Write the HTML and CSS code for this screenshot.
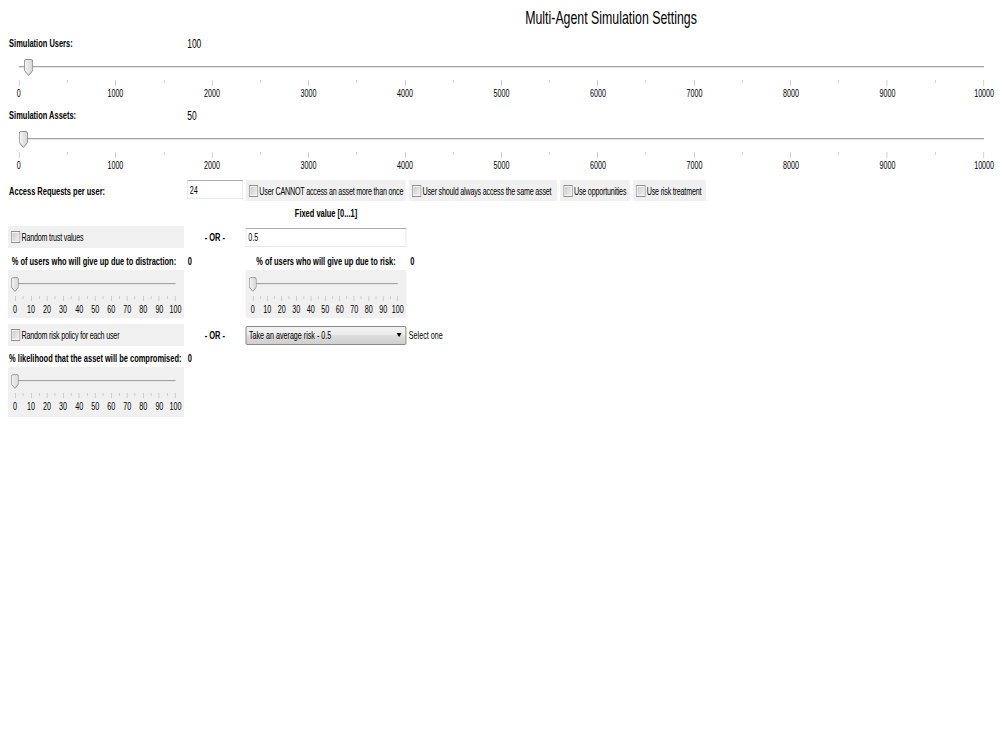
FILE: index.html
```html
<!DOCTYPE html>
<html lang="en">
<head>
  <meta charset="UTF-8">
  <meta name="viewport" content="width=device-width, initial-scale=1.0">
  <title>Multi-Agent Simulation Settings</title>
  <link rel="stylesheet" href="styles.css">
</head>
<body>
  <svg class="defs" width="0" height="0">
    <defs>
      <linearGradient id="thumbGrad" x1="0" y1="0" x2="1" y2="0">
        <stop offset="0" stop-color="#f6f6f6"/>
        <stop offset="1" stop-color="#d4d4d4"/>
      </linearGradient>
      <symbol id="thumb" viewBox="0 0 14 17">
        <path d="M0.5 3 Q0.5 0.5 3 0.5 H11 Q13.5 0.5 13.5 3 V11.5 L7 16.5 L0.5 11.5 Z" fill="url(#thumbGrad)" stroke="#767676"/>
      </symbol>
    </defs>
  </svg>

  <div class="frame">
  <div class="page">
    <h1 class="title">Multi-Agent Simulation Settings</h1>

    <div class="setting">
      <div class="setting-head">
        <span class="setting-name">Simulation Users:</span>
        <span class="setting-value">100</span>
      </div>
      <div class="slider big" data-max="10000" data-value="100">
        <div class="track"><svg class="thumb"><use href="#thumb"/></svg></div>
        <div class="ticks"></div>
        <div class="labels"></div>
      </div>
    </div>

    <div class="setting">
      <div class="setting-head">
        <span class="setting-name">Simulation Assets:</span>
        <span class="setting-value">50</span>
      </div>
      <div class="slider big" data-max="10000" data-value="50">
        <div class="track"><svg class="thumb"><use href="#thumb"/></svg></div>
        <div class="ticks"></div>
        <div class="labels"></div>
      </div>
    </div>

    <div class="options">
      <div class="row row-access">
        <span class="c1 name">Access Requests per user:</span>
        <div class="c2"><input class="field short" type="text" value="24"></div>
        <div class="checks">
          <label class="check w1"><span class="box"></span>User CANNOT access an asset more than once</label>
          <label class="check w2"><span class="box"></span>User should always access the same asset</label>
          <label class="check w3"><span class="box"></span>Use opportunities</label>
          <label class="check w4"><span class="box"></span>Use risk treatment</label>
        </div>
      </div>

      <div class="row row-caption">
        <span class="c3 solo name center">Fixed value [0...1]</span>
      </div>

      <div class="row row-choice">
        <label class="c1 check"><span class="box"></span>Random trust values</label>
        <span class="c2 name center">- OR -</span>
        <input class="c3 field" type="text" value="0.5">
      </div>

      <div class="row row-label">
        <span class="c1 name indent">% of users who will give up due to distraction:</span>
        <span class="c2 name num">0</span>
        <span class="c3 name center">% of users who will give up due to risk:</span>
        <span class="c4 name num">0</span>
      </div>

      <div class="row row-sliders">
        <div class="c1 slider-panel">
          <div class="slider small" data-max="100" data-value="0">
            <div class="track"><svg class="thumb"><use href="#thumb"/></svg></div>
            <div class="ticks"></div>
            <div class="labels"></div>
          </div>
        </div>
        <div class="c3 skip-c2 slider-panel">
          <div class="slider small" data-max="100" data-value="0">
            <div class="track"><svg class="thumb"><use href="#thumb"/></svg></div>
            <div class="ticks"></div>
            <div class="labels"></div>
          </div>
        </div>
      </div>

      <div class="row row-choice risk">
        <label class="c1 check"><span class="box"></span>Random risk policy for each user</label>
        <span class="c2 name center">- OR -</span>
        <div class="c3 combo">
          <span>Take an average risk - 0.5</span>
          <svg class="arrow" width="8" height="4" viewBox="0 0 8 4"><path d="M0 0 H8 L4 4 Z" fill="#000"/></svg>
        </div>
        <span class="c4">Select one</span>
      </div>

      <div class="row row-label tight">
        <span class="c1 name">% likelihood that the asset will be compromised:</span>
        <span class="c2 name num">0</span>
      </div>

      <div class="row row-sliders tall">
        <div class="c1 slider-panel">
          <div class="slider small" data-max="100" data-value="0">
            <div class="track"><svg class="thumb"><use href="#thumb"/></svg></div>
            <div class="ticks"></div>
            <div class="labels"></div>
          </div>
        </div>
      </div>
    </div>
  </div>
  </div>

  <script>
    document.querySelectorAll('.slider').forEach(slider => {
      const max = Number(slider.dataset.max);
      const value = Number(slider.dataset.value);
      const ticks = slider.querySelector('.ticks');
      const labels = slider.querySelector('.labels');

      for (let i = 0; i <= 20; i++) {
        const tick = document.createElement('span');
        tick.className = i % 2 ? 'tick minor' : 'tick';
        ticks.appendChild(tick);
      }
      for (let i = 0; i <= 10; i++) {
        const label = document.createElement('span');
        label.textContent = i * max / 10;
        labels.appendChild(label);
      }
      slider.querySelector('.thumb').style.left = (value / max * 100) + '%';
    });
  </script>
</body>
</html>
```

FILE: styles.css
```css
body {
  margin: 0;
  background-color: #fff;
  color: #000;
  font-family: "Liberation Sans", Arial, sans-serif;
  font-size: 11px;
}
.defs {
  position: absolute;
}
.frame {
  width: 1000px;
  overflow: hidden;
}
/* the whole form is drawn narrow, like the original window */
.page {
  width: 1539px;
  transform: scaleX(0.65);
  transform-origin: 0 0;
}
.title {
  margin: 8px 0 0;
  padding-left: 808px;
  font-size: 19px;
  font-weight: normal;
  line-height: 20px;
}
.setting {
  padding: 7px 0 0 14px;
}
.setting + .setting {
  padding-top: 8px;
}
.setting-head {
  display: flex;
  align-items: center;
  height: 16px;
}
.setting-name {
  width: 274px;
  font-size: 11.5px;
  font-weight: bold;
}
.setting-value {
  font-size: 13px;
}

/* sliders */
.slider.big {
  margin-left: 15px;
  width: 1485px;
  padding-top: 8px;
}
.track {
  position: relative;
  height: 18px;
}
.track::before {
  content: "";
  position: absolute;
  left: 0;
  right: 0;
  top: 7px;
  border-top: 1px solid #a3a3a3;
  border-bottom: 1px solid #e6e6e6;
}
.thumb {
  position: absolute;
  top: 0;
  width: 14px;
  height: 17px;
  transform: translateX(-50%);
}
.ticks {
  display: flex;
  justify-content: space-between;
  align-items: flex-start;
  height: 6px;
  margin-top: 3px;
}
.tick {
  width: 1px;
  height: 6px;
  background-color: #b8b8b8;
}
.tick.minor {
  height: 3px;
}
.labels {
  display: flex;
  justify-content: space-between;
  height: 12px;
  line-height: 12px;
  margin-top: 1px;
}
.labels span {
  display: flex;
  justify-content: center;
  width: 0;
  white-space: nowrap;
}
.slider-panel {
  box-sizing: border-box;
  height: 100%;
  padding: 6px 13px 0 11px;
  background-color: #f0f0f0;
}
.slider.small .thumb {
  width: 12px;
}
.slider.small .ticks {
  height: 5px;
  margin-top: 2px;
}
.slider.small .tick {
  height: 5px;
}
.slider.small .tick.minor {
  height: 3px;
}
.slider.small .labels {
  margin-top: 2px;
}

/* option rows */
.options {
  margin: 9px 0 0 12px;
}
.row {
  display: flex;
  align-items: center;
  white-space: nowrap;
}
.c1 {
  box-sizing: border-box;
  width: 271px;
  flex: none;
}
.c2 {
  box-sizing: border-box;
  width: 95px;
  flex: none;
}
.c3 {
  box-sizing: border-box;
  width: 247px;
  flex: none;
}
.c4 {
  padding-left: 4px;
}
.solo {
  margin-left: 366px;
}
.skip-c2 {
  margin-left: 95px;
}
.name {
  font-size: 11.5px;
  font-weight: bold;
}
.center {
  text-align: center;
}
.indent {
  padding-left: 6px;
}
.num {
  padding-left: 6px;
}
.row-access {
  height: 21px;
}
.row-access > .name {
  padding-left: 2px;
}
.row-access .c2 {
  align-self: flex-start;
}
.row-caption {
  height: 25px;
  line-height: 25px;
}
.row-choice {
  height: 22px;
}
.row-choice.risk {
  margin-top: 6px;
}
.row-label {
  height: 22px;
  align-items: flex-end;
  line-height: 16px;
}
.row-label > span {
  padding-bottom: 1px;
}
.row-label.tight {
  height: 21px;
}
.row-label.tight > .c1 {
  padding-left: 2px;
}
.row-label .c4 {
  padding-left: 6px;
}
.row-sliders {
  height: 48px;
  align-items: stretch;
}
.row-sliders.tall {
  height: 50px;
}

/* inputs */
.field {
  box-sizing: border-box;
  height: 19px;
  margin: 0;
  padding: 0 3px;
  border: 1px solid #abadb3;
  border-color: #abadb3 #dbdfe6 #e3e9ef #e2e3ea;
  background-color: #fff;
  font-family: inherit;
  font-size: 11px;
  color: #000;
}
.field.short {
  margin-left: 5px;
  width: 86px;
}
.checks {
  display: flex;
  gap: 5px;
  height: 21px;
}
.check {
  box-sizing: border-box;
  display: flex;
  align-items: center;
  height: 21px;
  padding-left: 5px;
  background-color: #f0f0f0;
  letter-spacing: -0.3px;
}
.row-choice .check {
  height: 22px;
}
.w1 { width: 246px; }
.w2 { width: 228px; }
.w3 { width: 107px; }
.w4 { width: 112px; }
.box {
  box-sizing: border-box;
  flex: none;
  width: 14px;
  height: 12px;
  margin-right: 2px;
  border: 1px solid #8e8f8f;
  background: linear-gradient(135deg, #c9c9c9, #f4f4f4);
  box-shadow: inset 0 0 0 1px #f7f7f7;
}
.combo {
  display: flex;
  align-items: center;
  justify-content: space-between;
  height: 19px;
  padding: 0 6px 0 4px;
  border: 1px solid #707070;
  border-radius: 2px;
  background: linear-gradient(#f2f2f2 0%, #ebebeb 50%, #dddddd 50%, #cfcfcf 100%);
}
```
